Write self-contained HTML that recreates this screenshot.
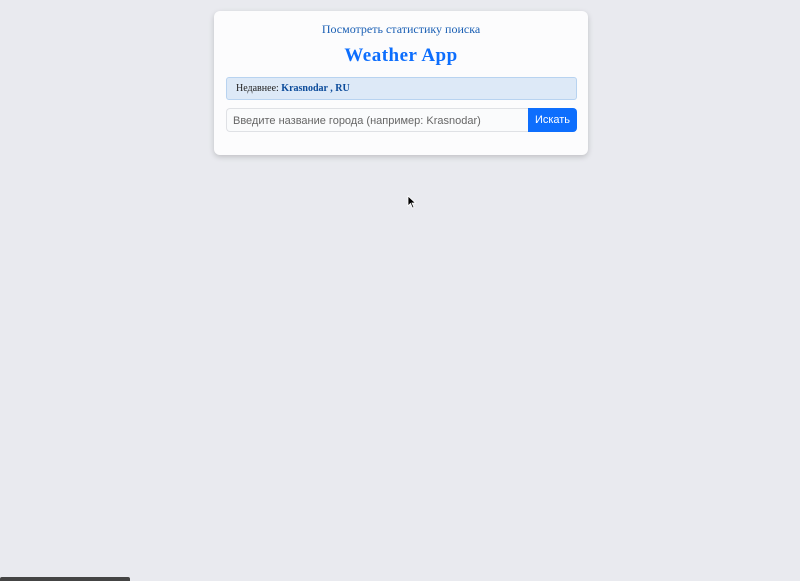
<!DOCTYPE html>
<html><head><meta charset="utf-8"><style>
body{margin:0;width:800px;height:581px;background:#e9eaef;position:relative;overflow:hidden;font-family:"Liberation Serif","DejaVu Serif",serif}
.card{position:absolute;left:214px;top:11px;width:374px;height:144px;background:#fcfcfd;border-radius:6px;box-shadow:0 2px 6px rgba(0,0,0,.18)}
.stat{position:absolute;top:11px;left:0;width:100%;text-align:center;font-size:12px;color:#1a5fb4}
.title{position:absolute;top:34px;left:0;width:100%;text-align:center;font-size:19px;color:#0d6efd;font-weight:bold;letter-spacing:.5px}
.recent{position:absolute;left:12px;top:66px;height:23px;background:#dde9f7;border:1px solid #b8d3f0;border-radius:3px;font-size:10px;line-height:22px;padding-left:9px;box-sizing:border-box;width:351px;color:#222}
.recent b{color:#0a4a9a}
.input{position:absolute;left:12px;top:97px;width:302px;height:24px;border:1px solid #dfe1e5;border-right:none;border-radius:4px 0 0 4px;background:#fafbfc;font-family:"Liberation Sans",sans-serif;font-size:11px;color:#666;line-height:24px;padding-left:6px;box-sizing:border-box}
.btn{position:absolute;left:314px;top:97px;width:49px;height:24px;background:#0d6efd;color:#fff;border-radius:0 4px 4px 0;font-family:"Liberation Sans",sans-serif;font-size:11px;line-height:25px;text-align:center}
.bar{position:absolute;left:0;top:577px;width:130px;height:4px;background:#444;border-radius:2px 2px 0 0}
</style></head><body>
<div class="card">
<div class="stat">Посмотреть статистику поиска</div>
<div class="title">Weather App</div>
<div class="recent">Недавнее: <b>Krasnodar , RU</b></div>
<div class="input">Введите название города (например: Krasnodar)</div>
<div class="btn">Искать</div>
</div>
<svg style="position:absolute;left:407px;top:195px" width="10" height="14" viewBox="0 0 10 14"><path d="M1 1 L1 11 L3.5 8.5 L5.5 13 L7 12.3 L5 8 L8.5 8 Z" fill="#000" stroke="#fff" stroke-width="0.8"/></svg>
<div class="bar"></div>
</body></html>
